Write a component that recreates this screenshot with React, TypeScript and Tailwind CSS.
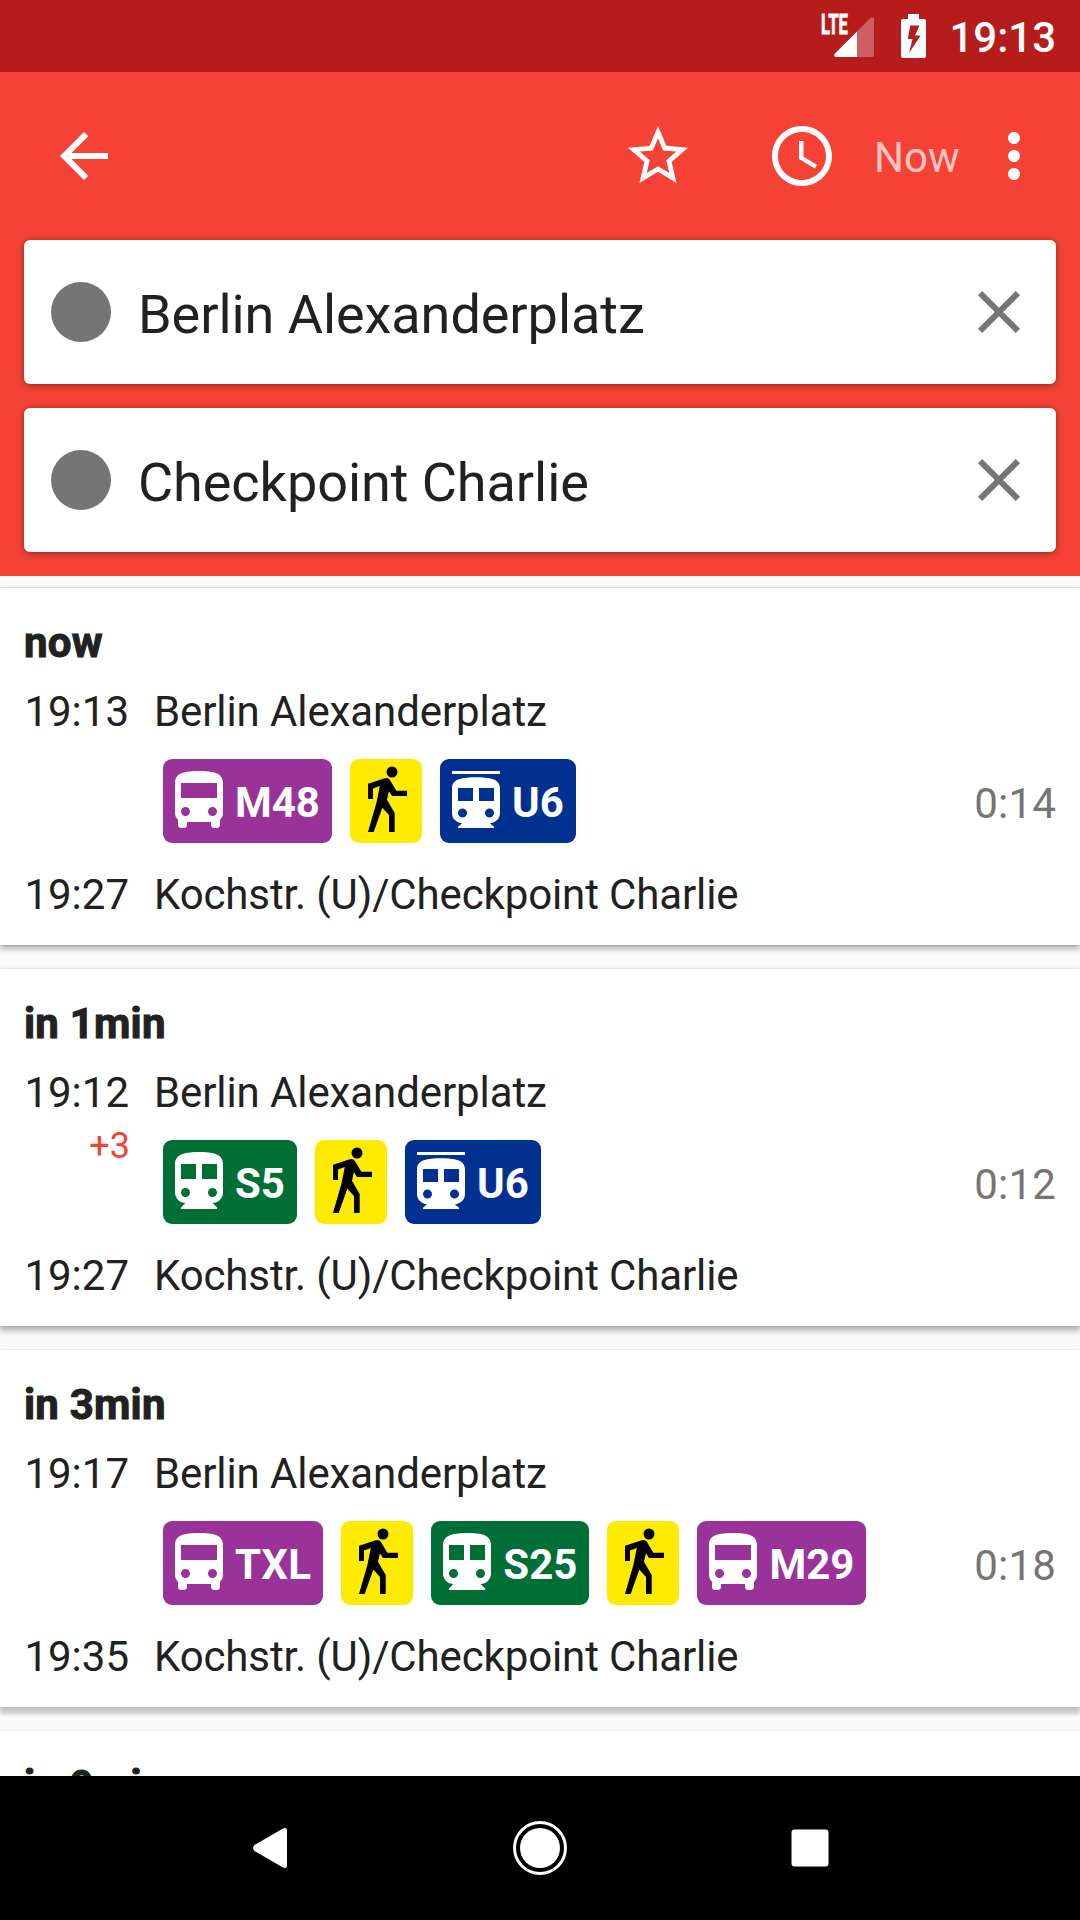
import type { ReactNode } from "react";

type LineKind = "bus" | "sbahn" | "ubahn";
type Leg = { kind: LineKind; label: string } | { kind: "walk" };

interface Trip {
  when: string;
  depart: string;
  delay?: string;
  from: string;
  legs: Leg[];
  arrive: string;
  to: string;
  duration: string;
  shadow: string;
}

const FROM = "Berlin Alexanderplatz";
const TO = "Kochstr. (U)/Checkpoint Charlie";

const trips: Trip[] = [
  {
    when: "now",
    depart: "19:13",
    from: FROM,
    legs: [{ kind: "bus", label: "M48" }, { kind: "walk" }, { kind: "ubahn", label: "U6" }],
    arrive: "19:27",
    to: TO,
    duration: "0:14",
    shadow: "shadow-[0_0_2px_rgba(0,0,0,0.34),0_4px_6px_rgba(0,0,0,0.28)]",
  },
  {
    when: "in 1min",
    depart: "19:12",
    delay: "+3",
    from: FROM,
    legs: [{ kind: "sbahn", label: "S5" }, { kind: "walk" }, { kind: "ubahn", label: "U6" }],
    arrive: "19:27",
    to: TO,
    duration: "0:12",
    shadow: "shadow-[0_0_2px_rgba(0,0,0,0.24),0_5px_6px_rgba(0,0,0,0.28)]",
  },
  {
    when: "in 3min",
    depart: "19:17",
    from: FROM,
    legs: [
      { kind: "bus", label: "TXL" },
      { kind: "walk" },
      { kind: "sbahn", label: "S25" },
      { kind: "walk" },
      { kind: "bus", label: "M29" },
    ],
    arrive: "19:35",
    to: TO,
    duration: "0:18",
    shadow: "shadow-[0_0_2px_rgba(0,0,0,0.18),0_7px_4px_rgba(0,0,0,0.2)]",
  },
];

function Icon({ children, className = "" }: { children: ReactNode; className?: string }) {
  return (
    <svg viewBox="0 0 24 24" fill="currentColor" fillRule="evenodd" className={`size-[72px] shrink-0 ${className}`}>
      {children}
    </svg>
  );
}

const linePaths: Record<LineKind, string> = {
  bus: "M4 16c0 .88.39 1.67 1 2.22V20c0 .55.45 1 1 1h1c.55 0 1-.45 1-1v-1h8v1c0 .55.45 1 1 1h1c.55 0 1-.45 1-1v-1.78c.61-.55 1-1.34 1-2.22V6c0-3.5-3.58-4-8-4s-8 .5-8 4v10zm3.5 1c-.83 0-1.5-.67-1.5-1.5S6.67 14 7.5 14s1.500.67 1.5 1.5S8.330 17 7.5 17zm9 0c-.83 0-1.5-.67-1.5-1.5s.67-1.5 1.5-1.5 1.5.67 1.5 1.5-.67 1.5-1.5 1.5zM18 11H6V6h12v5z",
  sbahn:
    "M12 2c-4 0-8 .5-8 4v9.500C4 17.430 5.570 19 7.5 19L6 20.5v.5h12v-.5L16.5 19c1.930 0 3.5-1.570 3.5-3.5V6c0-3.5-3.580-4-8-4zM7.5 17c-.83 0-1.5-.67-1.5-1.5S6.670 14 7.5 14s1.5.67 1.5 1.5S8.330 17 7.5 17zm3.5-6H6V6h5v5zm5.500 6c-.83 0-1.5-.67-1.5-1.5s.67-1.5 1.5-1.5 1.5.67 1.5 1.5-.67 1.5-1.5 1.5zm1.5-6h-5V6h5v5z",
  ubahn:
    "M4 2h16v1H4zM12 4.100c-4.400 0-8 .5-8 3.700V16c0 1.900 1.500 3.300 3.400 3.400L6 20.600v.4h12v-.4l-1.400-1.200C18.500 19.300 20 17.900 20 16V7.800c0-3.200-3.600-3.700-8-3.700zM7.5 17.500a1.500 1.500 0 1 1 0-3 1.500 1.500 0 0 1 0 3zM11 12H6V7.650h5zM16.5 17.500a1.500 1.500 0 1 1 0-3 1.500 1.500 0 0 1 0 3zM18 12h-5V7.650h5z",
};

const lineColors: Record<LineKind, string> = {
  bus: "bg-[#993399]",
  sbahn: "bg-[#006f35]",
  ubahn: "bg-[#003090]",
};

function LegBadge({ leg }: { leg: Leg }) {
  if (leg.kind === "walk") {
    return (
      <div className="h-[84px] w-[72px] rounded-[9px] bg-[#ffeb00]">
        <svg viewBox="0 0 72 84" className="h-[84px] w-[72px]">
          <circle cx="42" cy="13" r="5.5" />
          <path d="M18 24.700L34 19.500Q38 18.300 39.800 20.700L46.300 31.700H57V37H42L38.900 32.300L37 40.700L44.700 54V73H39V56L32.300 48.700L23.700 73H18L26.500 43.500L29.800 27L23 29.400V40H18Z" />
        </svg>
      </div>
    );
  }
  return (
    <div className={`flex h-[84px] items-center rounded-[9px] pr-3 text-white ${lineColors[leg.kind]}`}>
      <Icon>
        <path d={linePaths[leg.kind]} />
      </Icon>
      <span
        className={`relative top-[2px] text-[42px] leading-[48px] font-bold ${leg.label === "TXL" ? "tracking-[0.3px]" : ""}`}
      >
        {leg.label}
      </span>
    </div>
  );
}

function TripTitle({ children }: { children: string }) {
  return <h2 className="font-bold tracking-[0.2px] [-webkit-text-stroke:1px_#212121]">{children}</h2>;
}

function TripCard({ trip }: { trip: Trip }) {
  return (
    <article className={`h-[357px] shrink-0 bg-white px-6 pt-[31px] text-[42px] leading-[48px] ${trip.shadow}`}>
      <TripTitle>{trip.when}</TripTitle>
      <div className="mt-[21px] flex">
        <span className="w-[105px] text-right">{trip.depart}</span>
        <span className="ml-[25px] tracking-[-0.1px]">{trip.from}</span>
      </div>
      <div className="flex h-[135px]">
        <span className="mt-2 w-[106px] text-right text-[36px] leading-[42px] text-[#f44336]">{trip.delay}</span>
        <div className="mt-[23px] ml-[33px] flex h-[84px] gap-[18px]">
          {trip.legs.map((leg, i) => (
            <LegBadge key={i} leg={leg} />
          ))}
        </div>
        <span className="mt-[44px] ml-auto tracking-[0.2px] text-[#757575]">{trip.duration}</span>
      </div>
      <div className="flex">
        <span className="w-[105px] text-right">{trip.arrive}</span>
        <span className="ml-[25px] tracking-[-0.13px]">{trip.to}</span>
      </div>
    </article>
  );
}

function LocationField({ value }: { value: string }) {
  return (
    <div className="flex h-36 items-center rounded-[6px] bg-white pr-[21px] pl-[27px] shadow-[0_1px_6px_rgba(0,0,0,0.45)]">
      <span className="size-[60px] rounded-full bg-[#757575]" />
      <span className="relative top-[3px] ml-[27px] flex-1 text-[54px] leading-[64px] tracking-[-0.05px]">{value}</span>
      <Icon className="text-[#757575]">
        <path d="M19 6.410L17.590 5 12 10.590 6.410 5 5 6.410 10.590 12 5 17.590 6.410 19 12 13.410 17.590 19 19 17.590 13.410 12z" />
      </Icon>
    </div>
  );
}

function StatusBar() {
  return (
    <div className="flex h-[72px] shrink-0 items-start justify-end bg-[#b71c1c] pr-6 text-white">
      <div className="relative mt-[17px] h-10 w-10">
        <svg viewBox="0 0 40 40" className="size-10">
          <path d="M23 14.500V40H2Q-1 39.500 1 36.500Z" fill="#fff" />
          <path d="M23 14.500L36.500 1Q39.500-1 40 2V38Q40 40 38 40H23Z" fill="#fff" fillOpacity="0.3" />
        </svg>
        <span className="absolute -top-[4px] -left-[13px] origin-left scale-x-[0.62] text-[27px] leading-[24px] font-bold [-webkit-text-stroke:0.8px_#fff]">
          LTE
        </span>
      </div>
      <svg viewBox="0 0 25 44" className="mt-[14px] ml-[27px] h-11 w-[25px]">
        <path
          fill="#fff"
          fillRule="evenodd"
          d="M7 0H18V5H23Q25 5 25 7V42Q25 44 23 44H2Q0 44 0 42V7Q0 5 2 5H7ZM9.300 11.500L6.800 25H11.500L8 39L19.700 21.500H14L18.500 11.500Z"
        />
      </svg>
      <span className="mt-[14px] ml-[23px] text-[42px] leading-[48px] font-medium">19:13</span>
    </div>
  );
}

export default function App() {
  return (
    <div className="flex h-[1920px] w-[1080px] flex-col overflow-hidden bg-[#fafafa] font-[Roboto,sans-serif] text-[#212121]">
      <StatusBar />
      <header className="h-[504px] shrink-0 bg-[#f44336] px-6">
        <div className="flex h-[168px] items-center text-white">
          <Icon className="ml-6">
            <path d="M20 11H7.830l5.590-5.590L12 4l-8 8 8 8 1.410-1.410L7.830 13H20v-2z" />
          </Icon>
          <Icon className="ml-auto">
            <path d="M22 9.240l-7.190-.62L12 2 9.190 8.630 2 9.240l5.460 4.730L5.820 21 12 17.270 18.180 21l-1.630-7.030L22 9.240zM12 15.400l-3.760 2.270 1-4.280-3.320-2.880 4.380-.38L12 6.100l1.710 4.040 4.380.38-3.320 2.880 1 4.280L12 15.400z" />
          </Icon>
          <Icon className="ml-[72px]">
            <path d="M12 2C6.480 2 2 6.480 2 12s4.480 10 10 10 10-4.480 10-10S17.520 2 12 2zM12 20c-4.420 0-8-3.580-8-8s3.580-8 8-8 8 3.580 8 8-3.580 8-8 8zM12.500 7H11v6l5.250 3.150.75-1.230-4.500-2.670z" />
          </Icon>
          <span className="relative top-[2px] ml-9 w-[104px] text-[42px] leading-[48px] text-white/70">Now</span>
          <Icon className="mr-[6px]">
            <path d="M12 8c1.100 0 2-.9 2-2s-.9-2-2-2-2 .9-2 2 .9 2 2 2zm0 2c-1.100 0-2 .9-2 2s.9 2 2 2 2-.9 2-2-.9-2-2-2zm0 6c-1.100 0-2 .9-2 2s.9 2 2 2 2-.9 2-2-.9-2-2-2z" />
          </Icon>
        </div>
        <div className="flex flex-col gap-6">
          <LocationField value="Berlin Alexanderplatz" />
          <LocationField value="Checkpoint Charlie" />
        </div>
      </header>
      <main className="flex h-[1200px] shrink-0 flex-col gap-6 overflow-hidden pt-3">
        {trips.map((trip) => (
          <TripCard key={trip.when} trip={trip} />
        ))}
        <article className="h-[357px] shrink-0 bg-white px-6 pt-[31px] text-[42px] leading-[48px] shadow-[0_0_2px_rgba(0,0,0,0.18)]">
          <TripTitle>in 9min</TripTitle>
        </article>
      </main>
      <nav className="grid h-36 shrink-0 grid-cols-[270px_270px_270px] justify-center bg-black">
        <div className="grid place-items-center">
          <svg viewBox="0 0 34 40" className="h-10 w-[34px]">
            <path d="M1.500 17L30 .5Q34-1 34 3V37Q34 41 30 39.500L1.500 23Q-1.500 20 1.500 17Z" fill="#fff" />
          </svg>
        </div>
        <div className="grid place-items-center">
          <svg viewBox="0 0 54 54" className="size-[54px]">
            <circle cx="27" cy="27" r="25.500" fill="none" stroke="#fff" strokeWidth="3" />
            <circle cx="27" cy="27" r="20" fill="#fff" />
          </svg>
        </div>
        <div className="grid place-items-center">
          <svg viewBox="0 0 38 38" className="size-[38px]">
            <rect x="0.500" y="0.500" width="37" height="37" rx="3" fill="#fff" />
          </svg>
        </div>
      </nav>
    </div>
  );
}
